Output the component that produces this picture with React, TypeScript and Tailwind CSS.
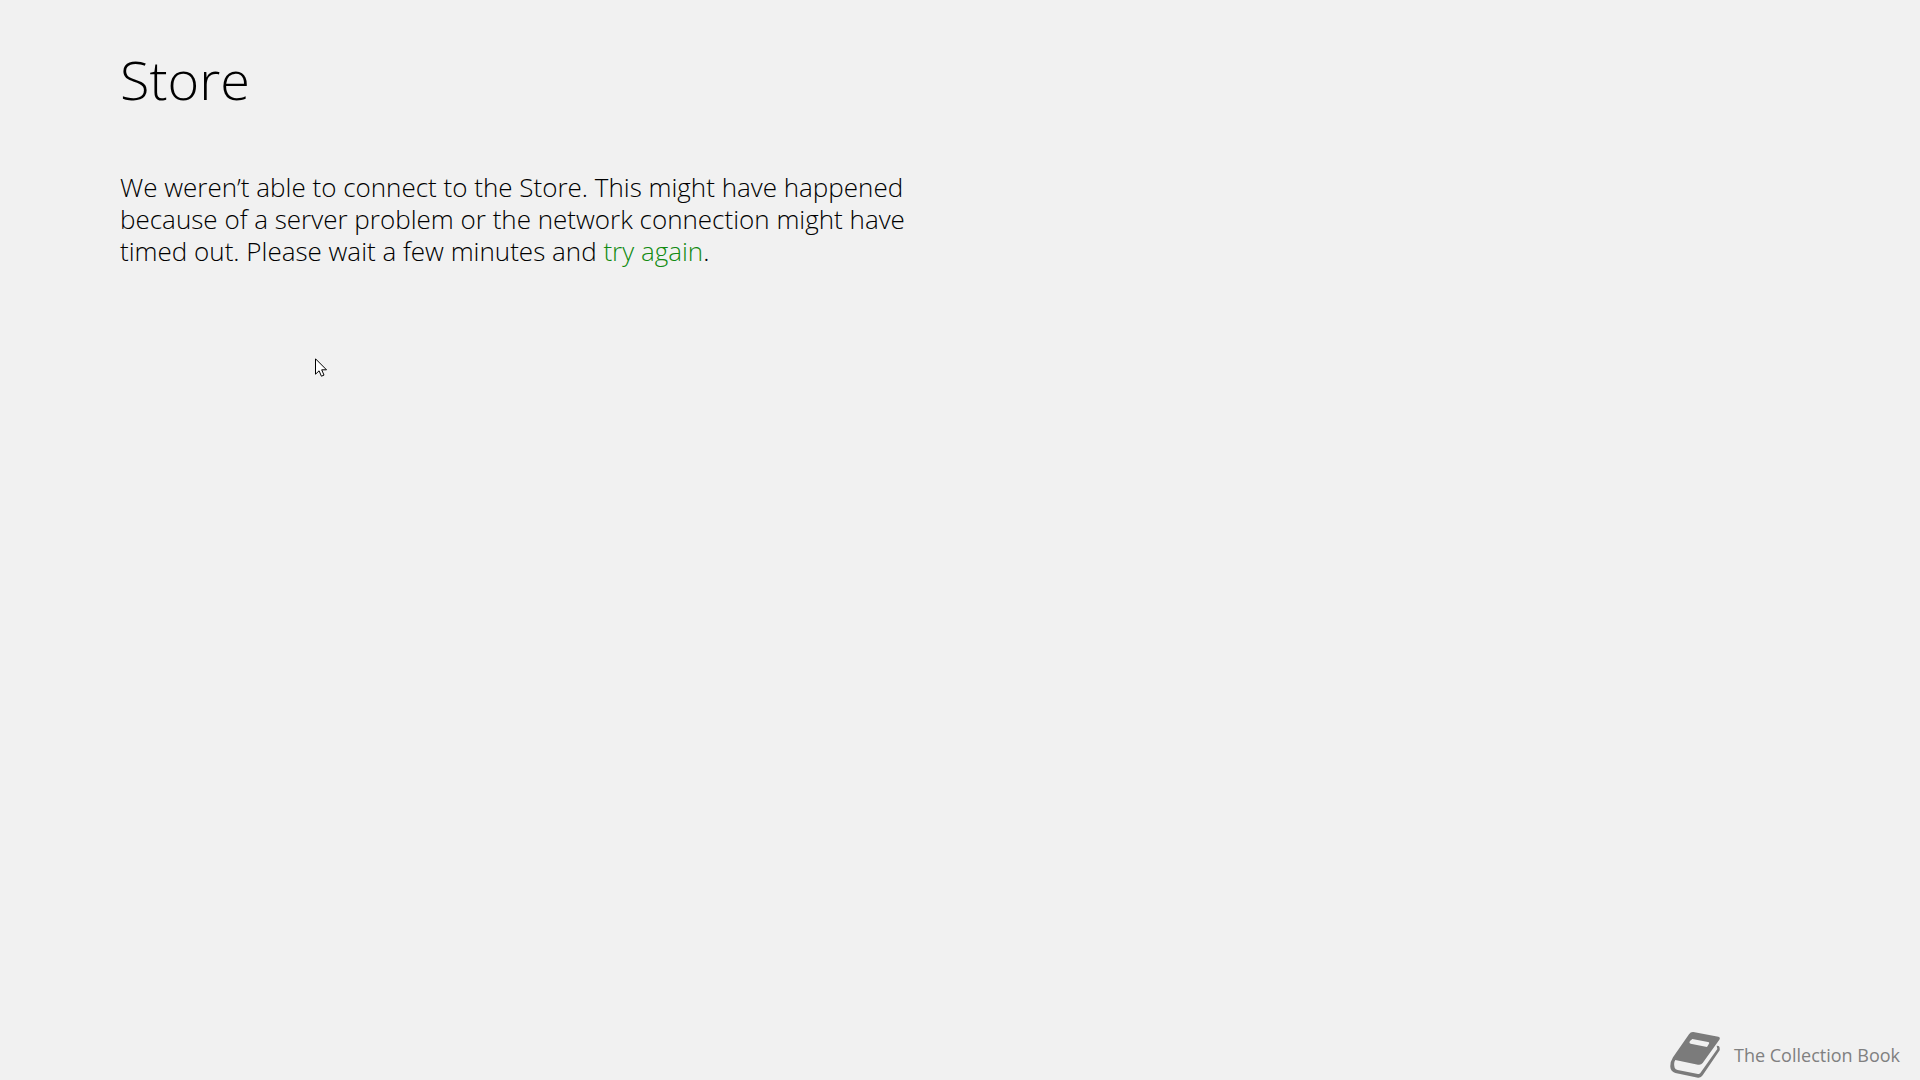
function BookIcon() {
  return (
    <svg viewBox="27 33 150 144" className="h-12 w-[50px]" fill="none" aria-hidden="true">
      <path
        d="M97 36 L172 50 Q179 52 175 59 L125 129 Q120 136 111 134 L43 120 Q37 128 41 143 Q43 148 50 150 L111 162 Q115 163 118 159 L169 87 L167 77 L173 78 Q177 80 176 91 L125 166 Q120 174 111 173 L43 159 Q29 155 28 141 Q27 126 36 112 L84 43 Q89 35 97 36 Z"
        fill="#7b7b7b"
      />
      <path d="M94 57 L141 66 Q147 67 143 73 L138 81 L89 71 Q83 69 87 63 Z" fill="#f1f1f1" />
    </svg>
  )
}

function Pointer() {
  return (
    <svg
      viewBox="0 0 12 19"
      className="pointer-events-none absolute top-[358px] left-[315px] h-[19px] w-3"
      aria-hidden="true"
    >
      <path
        d="M.5 .8V16.2L4.1 12.8L6.4 18.2L9 17.1L6.7 11.8H11.5Z"
        fill="#fff"
        stroke="#000"
        strokeLinejoin="round"
      />
    </svg>
  )
}

export default function App() {
  return (
    <div className="relative flex min-h-screen flex-col bg-[#f1f1f1] font-['Open_Sans','Noto_Sans',sans-serif] text-black">
      <main className="flex-1 px-30 pt-[43px] font-light">
        <h1 className="text-[54px] leading-[72px]">Store</h1>
        <p className="mt-14 max-w-[800px] text-[26px] leading-8">
          We weren’t able to connect to the Store. This might have happened because of a server
          problem or the network connection might have timed out. Please wait a few minutes and{' '}
          <a href="#" className="text-[#128b12]">
            try again
          </a>
          .
        </p>
      </main>
      <footer className="flex items-center justify-end gap-[14px] px-5 pb-px text-[#808080]">
        <BookIcon />
        <span className="text-lg">The Collection Book</span>
      </footer>
      <Pointer />
    </div>
  )
}
